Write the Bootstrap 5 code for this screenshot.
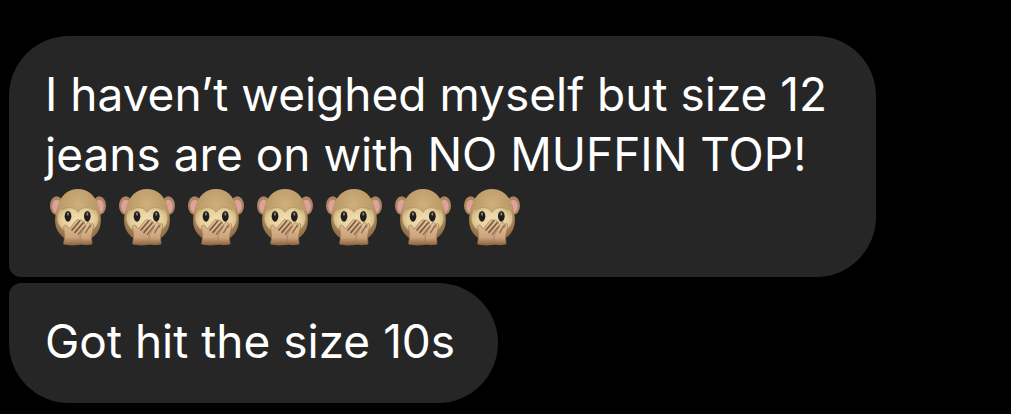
<!DOCTYPE html>
<html lang="en">
<head>
<meta charset="utf-8">
<meta name="viewport" content="width=device-width, initial-scale=1">
<title>Messages</title>
<link href="https://cdn.jsdelivr.net/npm/bootstrap@5.3.0/dist/css/bootstrap.min.css" rel="stylesheet">
<style>
body{background:#000;color:#fff;font-family:Inter,"Liberation Sans",sans-serif}
.thread{padding:36px 9px 8px;gap:6px}
.bubble{background:#262626;font-size:46px;line-height:60px;padding:28px 43px 32px 36px;max-width:867px}
.bubble-first{border-radius:60px 60px 60px 12px;padding-bottom:29px}
.bubble-last{border-radius:12px 60px 60px 60px}
.monkeys{gap:7px;margin-left:2px}
.monkey{width:62px;height:64px}
</style>
</head>
<body>
<svg width="0" height="0" class="position-absolute" aria-hidden="true">
  <defs>
    <radialGradient id="fur" cx=".5" cy=".3" r=".72"><stop offset="0" stop-color="#cfb07c"/><stop offset=".6" stop-color="#b99a66"/><stop offset="1" stop-color="#876640"/></radialGradient>
    <radialGradient id="face" cx=".5" cy=".5" r=".6"><stop offset="0" stop-color="#f0dfb2"/><stop offset=".65" stop-color="#e6d09c"/><stop offset="1" stop-color="#c5a673"/></radialGradient>
    <linearGradient id="hand" x1="0" y1="0" x2="0" y2="1"><stop offset="0" stop-color="#e3c49c"/><stop offset=".7" stop-color="#cba27b"/><stop offset="1" stop-color="#8f6241"/></linearGradient>
    <symbol id="monkey" viewBox="0 0 186 192">
      <!-- ears -->
      <ellipse cx="29" cy="65" rx="20" ry="28" fill="#a98860"/>
      <ellipse cx="157" cy="65" rx="20" ry="28" fill="#a98860"/>
      <ellipse cx="29" cy="67" rx="13" ry="20" fill="#e0a09c"/>
      <ellipse cx="157" cy="67" rx="13" ry="20" fill="#e0a09c"/>
      <!-- head -->
      <path d="M93 15C62 15 40 36 31 68C21 102 22 128 36 147C49 165 70 174 93 174C116 174 137 165 150 147C164 128 165 102 155 68C146 36 124 15 93 15Z" fill="url(#fur)"/>
      <!-- face mask -->
      <path d="M93 83C83 67 63 63 48 71C33 79 28 100 34 118C42 137 60 148 93 149C126 148 144 137 152 118C158 100 153 79 138 71C123 63 103 67 93 83Z" fill="url(#face)"/>
      <path d="M43 78C60 64 82 69 93 84C104 69 126 64 143 78" fill="none" stroke="#a78d5f" stroke-width="4" opacity=".6"/>
      <!-- eyes -->
      <ellipse cx="63" cy="97" rx="10" ry="16" fill="#211f1d"/>
      <ellipse cx="121" cy="97" rx="10" ry="16" fill="#211f1d"/>
      <ellipse cx="63" cy="90" rx="3" ry="5" fill="#85827b"/>
      <ellipse cx="121" cy="90" rx="3" ry="5" fill="#85827b"/>
      <!-- right hand behind -->
      <path d="M97 179L98 148L118 121Q124 110 129 118L131 131L133 120Q140 114 140 128L133 158L135 180Q116 185 97 179Z" fill="url(#hand)" stroke="#9b774f" stroke-width="2"/>
      <!-- left hand in front -->
      <path d="M50 180L53 157L50 130Q52 118 60 126L67 135L87 110Q94 103 97 109Q105 104 107 112Q114 111 113 120Q119 121 114 130L99 154L101 181Q75 186 50 180Z" fill="url(#hand)" stroke="#9b774f" stroke-width="2"/>
      <path d="M98 111L75 138M108 117L84 145" fill="none" stroke="#7a583f" stroke-width="5" stroke-linecap="round"/>
      <path d="M113 127L94 151M129 125L116 146" fill="none" stroke="#8c684b" stroke-width="4" stroke-linecap="round"/>
    </symbol>
  </defs>
</svg>
<main class="thread d-flex flex-column align-items-start">
  <div class="bubble bubble-first">
    <p class="m-0">I haven’t weighed myself but size 12 jeans are on with NO MUFFIN TOP!</p>
    <div class="monkeys d-flex" role="img" aria-label="Seven speak-no-evil monkeys">
      <svg class="monkey"><use href="#monkey"/></svg>
      <svg class="monkey"><use href="#monkey"/></svg>
      <svg class="monkey"><use href="#monkey"/></svg>
      <svg class="monkey"><use href="#monkey"/></svg>
      <svg class="monkey"><use href="#monkey"/></svg>
      <svg class="monkey"><use href="#monkey"/></svg>
      <svg class="monkey"><use href="#monkey"/></svg>
    </div>
  </div>
  <div class="bubble bubble-last"><p class="m-0">Got hit the size 10s</p></div>
</main>
<script src="https://cdn.jsdelivr.net/npm/bootstrap@5.3.0/dist/js/bootstrap.bundle.min.js"></script>
</body>
</html>
